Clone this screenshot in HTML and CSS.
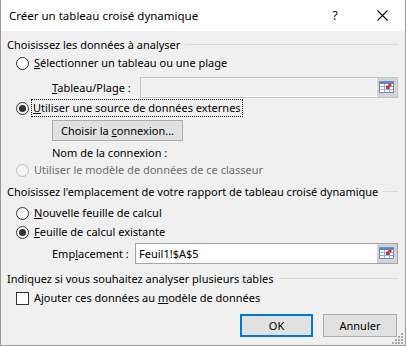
FILE: index.html
```html
<!DOCTYPE html>
<html lang="fr">
<head>
<meta charset="utf-8">
<title>Créer un tableau croisé dynamique</title>
<link rel="stylesheet" href="styles.css">
</head>
<body>
<div class="window">
  <div class="titlebar">
    <span class="title">Créer un tableau croisé dynamique</span>
    <span class="help">?</span>
    <span class="close"><svg width="11" height="11" viewBox="0 0 11 11"><path d="M0.5 0.5 L10.5 10.5 M10.5 0.5 L0.5 10.5" stroke="#000" stroke-width="1.1" fill="none"/></svg></span>
  </div>
  <div class="content">
    <div class="group-head h1"><span>Choisissez les données à analyser</span><i class="rule"></i></div>
    <div class="radio-row r1"><span class="radio"></span><span class="lbl"><u>S</u>électionner un tableau ou une plage</span></div>
    <div class="field-row tab-row disabled-field">
      <span class="field-label"><u>T</u>ableau/Plage :</span>
      <div class="field field-dis">
        <div class="field-input"></div>
        <div class="field-btn">
          <svg width="16" height="14" viewBox="0 0 16 14"><rect x="0.5" y="1.5" width="14" height="11" fill="#fff" stroke="#6a8fc8"/><rect x="1" y="2" width="13" height="2" fill="#5a86c9"/><path d="M1 6.5 H14 M1 9.5 H14 M5.5 4 V12 M10.5 4 V12" stroke="#8fb0e0" stroke-width="1"/><path d="M7 4 L10 7 L9 8 L13 8 L13 4 L12 5 L9 2 Z" fill="#d9342b" transform="rotate(90 10 6) translate(0 1)"/></svg>
        </div>
      </div>
    </div>
    <div class="radio-row r2"><span class="radio checked"></span><span class="lbl focus"><u>U</u>tiliser une source de données externes</span></div>
    <div class="btn-row"><button class="btn conn">Choisir la <u>c</u>onnexion...</button></div>
    <div class="nom-row">Nom de la connexion :</div>
    <div class="radio-row r3 disabled"><span class="radio"></span><span class="lbl">Utiliser le modèle de données de ce classeur</span></div>
    <div class="group-head h2"><span>Choisissez l'emplacement de votre rapport de tableau croisé dynamique</span><i class="rule"></i></div>
    <div class="radio-row r4"><span class="radio"></span><span class="lbl"><u>N</u>ouvelle feuille de calcul</span></div>
    <div class="radio-row r5"><span class="radio checked"></span><span class="lbl"><u>F</u>euille de calcul existante</span></div>
    <div class="field-row emp-row">
      <span class="field-label">Emp<u>l</u>acement :</span>
      <div class="field field-en">
        <div class="field-input">Feuil1!$A$5</div>
        <div class="field-btn">
          <svg width="16" height="14" viewBox="0 0 16 14"><rect x="0.5" y="1.5" width="14" height="11" fill="#fff" stroke="#6a8fc8"/><rect x="1" y="2" width="13" height="2" fill="#5a86c9"/><path d="M1 6.5 H14 M1 9.5 H14 M5.5 4 V12 M10.5 4 V12" stroke="#8fb0e0" stroke-width="1"/><path d="M7 4 L10 7 L9 8 L13 8 L13 4 L12 5 L9 2 Z" fill="#d9342b" transform="rotate(90 10 6) translate(0 1)"/></svg>
        </div>
      </div>
    </div>
    <div class="group-head h3"><span>Indiquez si vous souhaitez analyser plusieurs tables</span><i class="rule"></i></div>
    <div class="radio-row cb-row"><span class="checkbox"></span><span class="lbl">Ajouter ces données au <u>m</u>odèle de données</span></div>
    <div class="actions">
      <button class="btn ok">OK</button>
      <button class="btn cancel">Annuler</button>
    </div>
  </div>
  <svg class="grip" width="12" height="12" viewBox="0 0 12 12"><g fill="#a8a8a8"><rect x="9" y="1" width="2" height="2"/><rect x="6" y="4" width="2" height="2"/><rect x="9" y="4" width="2" height="2"/><rect x="3" y="7" width="2" height="2"/><rect x="6" y="7" width="2" height="2"/><rect x="9" y="7" width="2" height="2"/><rect x="0" y="10" width="2" height="2"/><rect x="3" y="10" width="2" height="2"/><rect x="6" y="10" width="2" height="2"/><rect x="9" y="10" width="2" height="2"/></g></svg>
</div>
</body>
</html>
```

FILE: styles.css
```css
* { box-sizing: border-box; }
html, body { margin: 0; padding: 0; }
body {
  font-family: "Noto Sans", "Open Sans", sans-serif;
  font-size: 11px;
  color: #000;
  background: #f0f0f0;
}
u { text-decoration: underline; text-underline-offset: 1px; }

.window {
  position: relative;
  width: 406px;
  height: 346px;
  background: #f0f0f0;
  border-left: 1px solid #9a9a9a;
  border-right: 1px solid #9a9a9a;
  border-bottom: 1px solid #9a9a9a;
  overflow: hidden;
}

.titlebar {
  height: 31px;
  background: #fff;
  display: flex;
  align-items: center;
  padding-left: 8px;
}
.title { flex: 1; font-size: 11.5px; padding-bottom: 1px; }
.help { width: 46px; text-align: center; font-size: 12px; margin-right: 1px; }
.close { width: 46px; display: flex; justify-content: center; align-items: center; margin-right: 0; }

.content {
  padding: 0 7px 0 6px;
  display: flex;
  flex-direction: column;
}

.group-head {
  height: 18px;
  display: flex;
  align-items: center;
  white-space: nowrap;
}
.group-head .rule {
  flex: 1;
  height: 1px;
  background: #dcdcdc;
  margin-left: 5px;
  margin-top: 1px;
}
.h1 { margin-top: 4px; }
.h2 { margin-top: 3px; }
.h3 { margin-top: 5px; }

.radio-row {
  height: 18px;
  display: flex;
  align-items: center;
  padding-left: 9px;
  white-space: nowrap;
}
.radio {
  width: 13px;
  height: 13px;
  border: 1px solid #333;
  border-radius: 50%;
  background: #fff;
  margin-right: 4px;
  display: flex;
  align-items: center;
  justify-content: center;
  flex: none;
}
.radio.checked::after {
  content: "";
  width: 7px;
  height: 7px;
  border-radius: 50%;
  background: #333;
}
.checkbox {
  width: 13px;
  height: 13px;
  border: 1px solid #333;
  background: #fff;
  margin-right: 4px;
  flex: none;
}
.r1 { margin-top: 1px; }
.r2 { margin-top: 1px; }
.r4 { margin-top: 4px; }
.r5 { margin-top: 1px; }
.cb-row { margin-top: 2px; }
.lbl { line-height: 16px; padding: 0 1px; }
.focus { outline: 1px dotted #000; outline-offset: 0; margin-left: -1px; }
.disabled .lbl { color: #6d6d6d; }
.disabled .radio { border-color: #bcbcbc; background: #f6f6f6; }

.field-row {
  height: 22px;
  display: flex;
  align-items: center;
  padding-left: 45px;
}
.tab-row { margin-top: 4px; }
.emp-row { margin-top: 1px; }
.field-label { white-space: nowrap; }
.tab-row .field-label { width: 88px; }
.emp-row .field-label { width: 83px; }
.field {
  flex: 1;
  height: 21px;
  display: flex;
  border: 1px solid #c5c5c5;
}
.field-en { border-color: #a5a5a5; }
.field-input {
  flex: 1;
  padding-left: 3px;
  line-height: 19px;
  background: #fff;
}
.field-dis .field-input {
  background: #f0f0f0;
  border-right: 1px solid #fff;
  border-bottom: 1px solid #fff;
}
.field-btn {
  width: 20px;
  background: #d4d4d4;
  display: flex;
  align-items: center;
  justify-content: center;
}

.btn {
  font-family: inherit;
  font-size: 11px;
  color: #000;
  background: #e1e1e1;
  border: 1px solid #adadad;
  padding: 0;
  margin: 0;
}
.btn-row { margin-top: 3px; padding-left: 45px; display: flex; }
.conn { width: 131px; height: 21px; }
.nom-row { margin-top: 4px; height: 16px; line-height: 16px; padding-left: 45px; }

.actions {
  margin-top: 7px;
  display: flex;
  justify-content: flex-end;
  gap: 10px;
  padding-right: 1px;
}
.ok { width: 73px; height: 23px; border: 2px solid #0078d7; }
.cancel { width: 74px; height: 23px; }

.grip { position: absolute; right: 1px; bottom: 1px; }
```
